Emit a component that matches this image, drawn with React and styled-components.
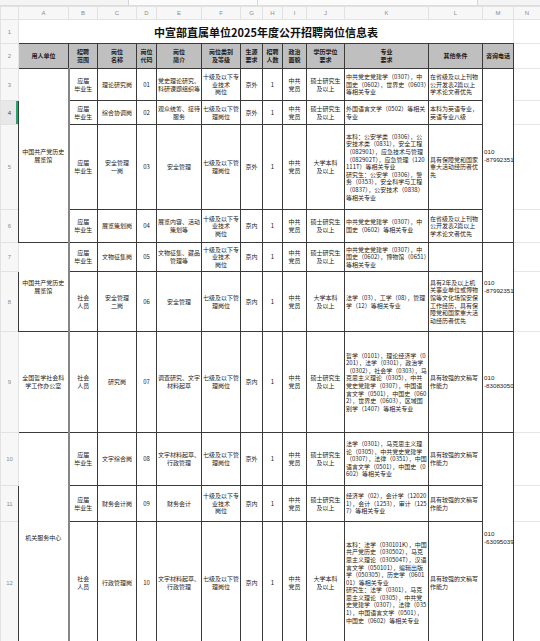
import React from "react";
import styled, { createGlobalStyle } from "styled-components";

const GlobalStyle = createGlobalStyle`
  html, body {
    margin: 0;
    padding: 0;
    background: #ffffff;
  }
  body {
    font-family: "Noto Sans CJK SC", "Liberation Sans", sans-serif;
    color: #222;
  }
`;

const Page = styled.div`
  width: 540px;
  overflow: hidden;
`;

const TopStrip = styled.div`
  height: 5px;
  display: flex;
  background: #f4f4f4;
  border-bottom: 1px solid #dcdcdc;
`;

const StripPart = styled.div`
  width: ${(p) => p.$w}px;
  border-right: 1px solid #d6d6d6;
  background: ${(p) => (p.$light ? "#fbfbfb" : "transparent")};
`;

const Sheet = styled.table`
  width: 540px;
  table-layout: fixed;
  border-collapse: collapse;
  border-spacing: 0;
`;

const ColHead = styled.th`
  height: 12px;
  padding: 0;
  font-family: "Liberation Sans", sans-serif;
  font-size: 6px;
  font-weight: normal;
  color: #8c8c8c;
  background: #f7f7f7;
  border: 1px solid #e2e2e2;
  text-align: center;
`;

const RowHead = styled.th`
  padding: 0;
  font-family: "Liberation Sans", sans-serif;
  font-size: 6px;
  font-weight: normal;
  color: ${(p) => (p.$active ? "#444" : "#8c8c8c")};
  background: ${(p) => (p.$active ? "#e8e8e8" : "#f7f7f7")};
  border: 1px solid #e2e2e2;
  text-align: center;
  box-shadow: ${(p) => (p.$active ? "inset -2px 0 0 #22a867" : "none")};
`;

const Blank = styled.td`
  padding: 0;
  border: 1px solid #e6e6e6;
`;

const Title = styled.td`
  padding: 0;
  border: 1px solid #e6e6e6;
  border-bottom: 1px solid #3a3a3a;
  text-align: center;
  vertical-align: middle;
  font-size: 11px;
  font-weight: bold;
  color: #111;
`;

const Cell = styled.td`
  padding: 0 1px;
  border: 1px solid #3a3a3a;
  font-size: 6px;
  line-height: 7.6px;
  text-align: ${(p) => p.$align || "center"};
  vertical-align: middle;
  white-space: pre-wrap;
  word-break: break-all;
  overflow: hidden;
  font-weight: ${(p) => (p.$head ? "bold" : "normal")};
  background: ${(p) => (p.$head ? "#bfbfbf" : "transparent")};
  color: ${(p) => (p.$head ? "#1a1a1a" : "#222")};
  ${(p) => p.$thick && "border-left: 2px solid #858585;"}
`;

const PhoneCell = styled(Cell)`
  white-space: pre;
  word-break: normal;
  overflow: visible;
  font-family: "Liberation Sans", sans-serif;
  font-size: 6.2px;
  line-height: 8px;
`;

const widths = [18, 50, 29, 39, 20, 45, 39, 22, 20, 24, 38, 84, 54, 31, 27];
const letters = ["", "A", "B", "C", "D", "E", "F", "G", "H", "I", "J", "K", "L", "M", "N"];

const headers = [
  "用人单位",
  "招聘\n范围",
  "岗位\n名称",
  "岗位\n代码",
  "岗位\n简介",
  "岗位类别\n及等级",
  "生源\n要求",
  "招聘\n人数",
  "政治\n面貌",
  "学历学位\n要求",
  "专业\n要求",
  "其他条件",
  "咨询电话",
];

const TEN = "十级及以下专业技术\n岗位";
const SEVEN = "七级及以下管理岗位";
const MS = "硕士研究生及以上";
const BA = "大学本科\n及以上";
const WRITE = "具有较强的文稿写作能力";

const rows = [
  {
    no: 3, h: 32, unit: ["中国共产党历史展览馆", 4], b: "应届\n毕业生", c: "理论研究岗", d: "01",
    e: "党史理论研究、科研课题组织等", f: TEN, g: "京外", j: MS,
    k: "中共党史党建学（0307），中国史（0602），世界史（0603）等相关专业",
    l: "在省级及以上刊物公开发表2篇以上学术论文者优先", m: ["010\n-87992351", 4],
  },
  {
    no: 4, h: 24, b: "应届\n毕业生", c: "综合协调岗", d: "02",
    e: "观众统筹、接待服务", f: SEVEN, g: "京外", j: MS,
    k: "外国语言文学（0502）等相关专业", l: "本科为英语专业，英语专业八级",
  },
  {
    no: 5, h: 85, b: "应届\n毕业生", c: "安全管理\n一岗", d: "03",
    e: "安全管理", f: SEVEN, g: "京外", j: BA,
    k: "本科：公安学类（0306），公安技术类（0831），安全工程（082901），应急技术与管理（082902T），应急管理（120111T）等相关专业\n研究生：公安学（0306），警务（0353），安全科学与工程（0837），公安技术（0838）等相关专业",
    l: "具有保障党和国家重大活动经历者优先",
  },
  {
    no: 6, h: 33, b: "应届\n毕业生", c: "展览策划岗", d: "04",
    e: "展览内容、活动策划等", f: TEN, g: "京内", j: MS,
    k: "中共党史党建学（0307），中国史（0602）等相关专业",
    l: "在省级及以上刊物公开发表2篇以上学术论文者优先",
  },
  {
    no: 7, h: 29, unit: ["中国共产党历史展览馆", 2], b: "应届\n毕业生", c: "文物征集岗", d: "05",
    e: "文物征集、藏品管理等", f: TEN, g: "京内", j: MS,
    k: "中共党史党建学（0307），中国史（0602），博物馆（0651）等相关专业",
    l: "", m: ["010\n-87992351", 2],
  },
  {
    no: 8, h: 60, b: "社会\n人员", c: "安全管理\n二岗", d: "06",
    e: "安全管理", f: SEVEN, g: "京内", j: BA,
    k: "法学（03），工学（08），管理学（12）等相关专业",
    l: "具有2年及以上机关事业单位或博物馆等文化场馆安保工作经历，具有保障党和国家重大活动经历者优先",
  },
  {
    no: 9, h: 101, unit: ["全国哲学社会科学工作办公室", 1], b: "社会\n人员", c: "研究岗", d: "07",
    e: "调查研究、文字材料起草", f: SEVEN, g: "京内", j: MS,
    k: "哲学（0101），理论经济学（0201），法学（0301），政治学（0302），社会学（0303），马克思主义理论（0305），中共党史党建学（0307），中国语言文学（0501），中国史（0602），世界史（0603），区域国别学（1407）等相关专业",
    l: WRITE, m: ["010\n-83083050", 1],
  },
  {
    no: 10, h: 53, unit: ["机关服务中心", 3], b: "应届\n毕业生", c: "文字综合岗", d: "08",
    e: "文字材料起草、行政管理", f: SEVEN, g: "京外", j: MS,
    k: "法学（0301），马克思主义理论（0305），中共党史党建学（0307），法律（0351），中国语言文学（0501），中国史（0602）等相关专业",
    l: WRITE, m: ["010\n-63095039", 3],
  },
  {
    no: 11, h: 36, b: "应届\n毕业生", c: "财务会计岗", d: "09",
    e: "财务会计", f: TEN, g: "京内", j: MS,
    k: "经济学（02），会计学（120201），会计（1253），审计（1257）等相关专业",
    l: WRITE,
  },
  {
    no: 12, h: 122, b: "社会\n人员", c: "行政管理岗", d: "10",
    e: "文字材料起草、行政管理", f: SEVEN, g: "京内", j: BA,
    k: "本科：法学（030101K），中国共产党历史（030502），马克思主义理论（030504T），汉语言文学（050101），编辑出版学（050305），历史学（060101）等相关专业\n研究生：法学（0301），马克思主义理论（0305），中共党史党建学（0307），法律（0351），中国语言文学（0501），中国史（0602）等相关专业",
    l: WRITE,
  },
];

export default function App() {
  return (
    <Page>
      <GlobalStyle />
      <TopStrip>
        <StripPart $w={128} />
        <StripPart $w={128} $light />
        <StripPart $w={219} $light />
      </TopStrip>
      <Sheet>
        <colgroup>
          {widths.map((w, i) => (
            <col key={i} style={{ width: w }} />
          ))}
        </colgroup>
        <tbody>
          <tr>
            {letters.map((l, i) => (
              <ColHead key={i}>{l}</ColHead>
            ))}
          </tr>
          <tr style={{ height: 24 }}>
            <RowHead>1</RowHead>
            <Title colSpan={13}>中宣部直属单位2025年度公开招聘岗位信息表</Title>
            <Blank />
          </tr>
          <tr style={{ height: 25 }}>
            <RowHead>2</RowHead>
            {headers.map((h, i) => (
              <Cell key={i} $head>
                {h}
              </Cell>
            ))}
            <Blank />
          </tr>
          {rows.map((r) => (
            <tr key={r.no} style={{ height: r.h }}>
              <RowHead $active={r.no === 4}>{r.no}</RowHead>
              {r.unit && <Cell rowSpan={r.unit[1]}>{r.unit[0]}</Cell>}
              <Cell $thick>{r.b}</Cell>
              <Cell>{r.c}</Cell>
              <Cell>{r.d}</Cell>
              <Cell>{r.e}</Cell>
              <Cell>{r.f}</Cell>
              <Cell>{r.g}</Cell>
              <Cell>1</Cell>
              <Cell>{"中共\n党员"}</Cell>
              <Cell>{r.j}</Cell>
              <Cell $align="left">{r.k}</Cell>
              <Cell $align="left">{r.l}</Cell>
              {r.m && (
                <PhoneCell rowSpan={r.m[1]} $align="left">
                  {r.m[0]}
                </PhoneCell>
              )}
              <Blank />
            </tr>
          ))}
        </tbody>
      </Sheet>
    </Page>
  );
}
